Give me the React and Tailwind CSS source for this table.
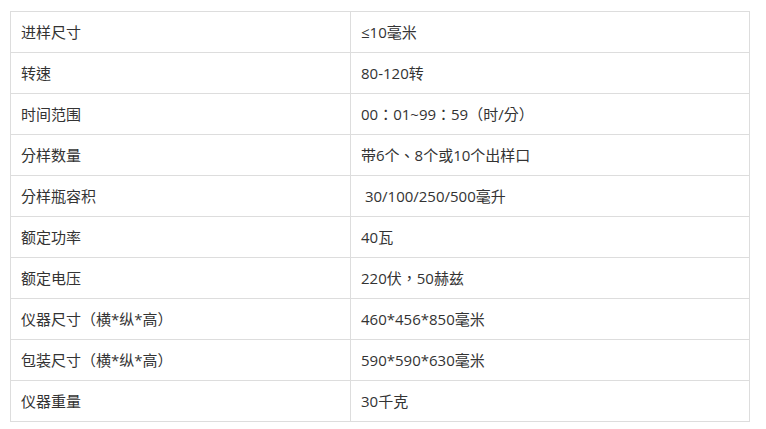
import React from "react";

const rows = [
  ["进样尺寸", "≤10毫米"],
  ["转速", "80-120转"],
  ["时间范围", "00：01~99：59（时/分）"],
  ["分样数量", "带6个、8个或10个出样口"],
  ["分样瓶容积", "\u00a030/100/250/500毫升"],
  ["额定功率", "40瓦"],
  ["额定电压", "220伏，50赫兹"],
  ["仪器尺寸（横*纵*高）", "460*456*850毫米"],
  ["包装尺寸（横*纵*高）", "590*590*630毫米"],
  ["仪器重量", "30千克"],
];

export default function App() {
  return (
    <div
      className="w-[766px] h-[429px] bg-white pt-[11px] pl-[10px]"
      style={{ fontFamily: '"Open Sans", "Noto Sans CJK TC", sans-serif' }}
    >
      <table className="w-[740px] border-collapse text-[15px] leading-[20px] text-[#333]">
        <tbody>
          {rows.map(([k, v], i) => (
            <tr key={i} className="h-[41px]">
              <td className="w-[340px] border border-[#ddd] px-[10px] align-middle">{k}</td>
              <td className="border border-[#ddd] px-[10px] align-middle">{v}</td>
            </tr>
          ))}
        </tbody>
      </table>
    </div>
  );
}
